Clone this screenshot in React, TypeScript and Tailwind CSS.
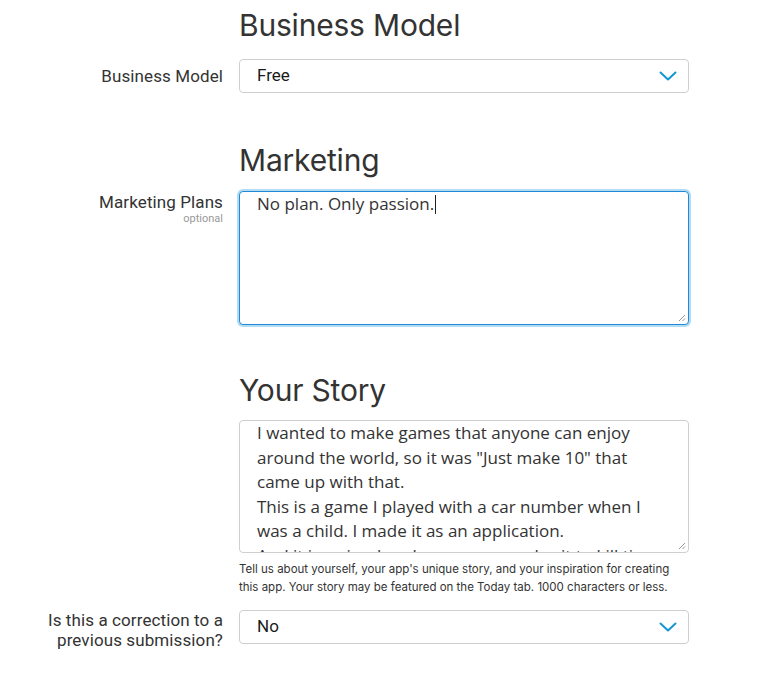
import React from "react";

const Chevron = () => (
  <svg width="18" height="10" viewBox="0 0 18 10" fill="none">
    <path d="M1.5 1.5 L9 8.5 L16.5 1.5" stroke="#1596d4" strokeWidth="2" strokeLinecap="round" strokeLinejoin="round" />
  </svg>
);

const Grip = () => (
  <svg width="8" height="8" viewBox="0 0 8 8" className="absolute right-[2px] bottom-[2px]">
    <path d="M7 1 L1 7 M7 4.5 L4.5 7" stroke="#8a8a8a" strokeWidth="0.9" />
  </svg>
);

const Select = ({ value }: { value: string }) => (
  <div className="h-[34px] w-[450px] rounded-[4px] border border-[#cfcfcf] bg-white flex items-center justify-between pl-[17px] pr-[11px] text-[17px] text-[#1a1a1a]" style={{ fontFamily: "Roboto, 'Liberation Sans', sans-serif" }}>
    <span>{value}</span>
    <Chevron />
  </div>
);

const Heading = ({ children }: { children: React.ReactNode }) => (
  <h2 className="text-[30px] leading-[36px] text-[#333] font-normal tracking-[-0.2px]" style={{ fontFamily: "Inter, 'Liberation Sans', sans-serif" }}>{children}</h2>
);

export default function App() {
  const label = { fontFamily: "Roboto, 'Liberation Sans', sans-serif" };
  const body = { fontFamily: "'Open Sans', 'Liberation Sans', sans-serif" };
  return (
    <div className="w-[773px] h-[673px] bg-white overflow-hidden">
      <div className="grid grid-cols-[223px_450px] gap-x-[16px]">
        {/* Business Model */}
        <div />
        <div className="pt-[7px]"><Heading>Business Model</Heading></div>
        <div className="mt-[16px] text-right text-[17px] leading-[34px] tracking-[0.1px] text-[#333]" style={label}>Business Model</div>
        <div className="mt-[16px]"><Select value="Free" /></div>

        {/* Marketing */}
        <div />
        <div className="pt-[49px]"><Heading>Marketing</Heading></div>
        <div className="mt-[13px] text-right" style={label}>
          <div className="text-[17px] leading-[20px] tracking-[0.1px] text-[#333] pt-[1px]">Marketing Plans</div>
          <div className="text-[11px] leading-[13px] text-[#9a9a9a]">optional</div>
        </div>
        <div className="mt-[13px]">
          <div className="relative h-[134px] w-[450px] rounded-[4px] border border-[#1e8ad6] shadow-[0_0_0_2px_#b3dbf3] bg-white pl-[17px]">
            <div className="text-[17px] leading-[24px] text-[#333] flex items-center" style={body}>
              <span>No plan. Only passion.</span>
              <span className="inline-block w-px h-[19px] bg-[#222] ml-[1px]" />
            </div>
            <Grip />
          </div>
        </div>

        {/* Your Story */}
        <div />
        <div className="pt-[47px]"><Heading>Your Story</Heading></div>
        <div />
        <div className="mt-[12px]">
          <div className="relative h-[133px] w-[450px] rounded-[4px] border border-[#cfcfcf] bg-white pl-[17px] pr-[20px] overflow-hidden">
            <div className="text-[17px] leading-[24.5px] text-[#333] pt-0" style={body}>
              I wanted to make games that anyone can enjoy<br />
              around the world, so it was "Just make 10" that<br />
              came up with that.<br />
              This is a game I played with a car number when I<br />
              was a child. I made it as an application.<br />
              And it is a simple rule, so you can play it to kill time.
            </div>
            <Grip />
          </div>
          <p className="mt-[7px] text-[11.5px] leading-[18px] text-[#333]" style={{ fontFamily: "Inter, 'Liberation Sans', sans-serif" }}>
            Tell us about yourself, your app's unique story, and your inspiration for creating this app. Your story may be featured on the Today tab. 1000 characters or less.
          </p>
        </div>

        {/* Correction */}
        <div className="mt-[14px] text-right text-[17px] leading-[20px] tracking-[0.1px] text-[#333]" style={label}>
          Is this a correction to a<br />previous submission?
        </div>
        <div className="mt-[14px]"><Select value="No" /></div>
      </div>
    </div>
  );
}
